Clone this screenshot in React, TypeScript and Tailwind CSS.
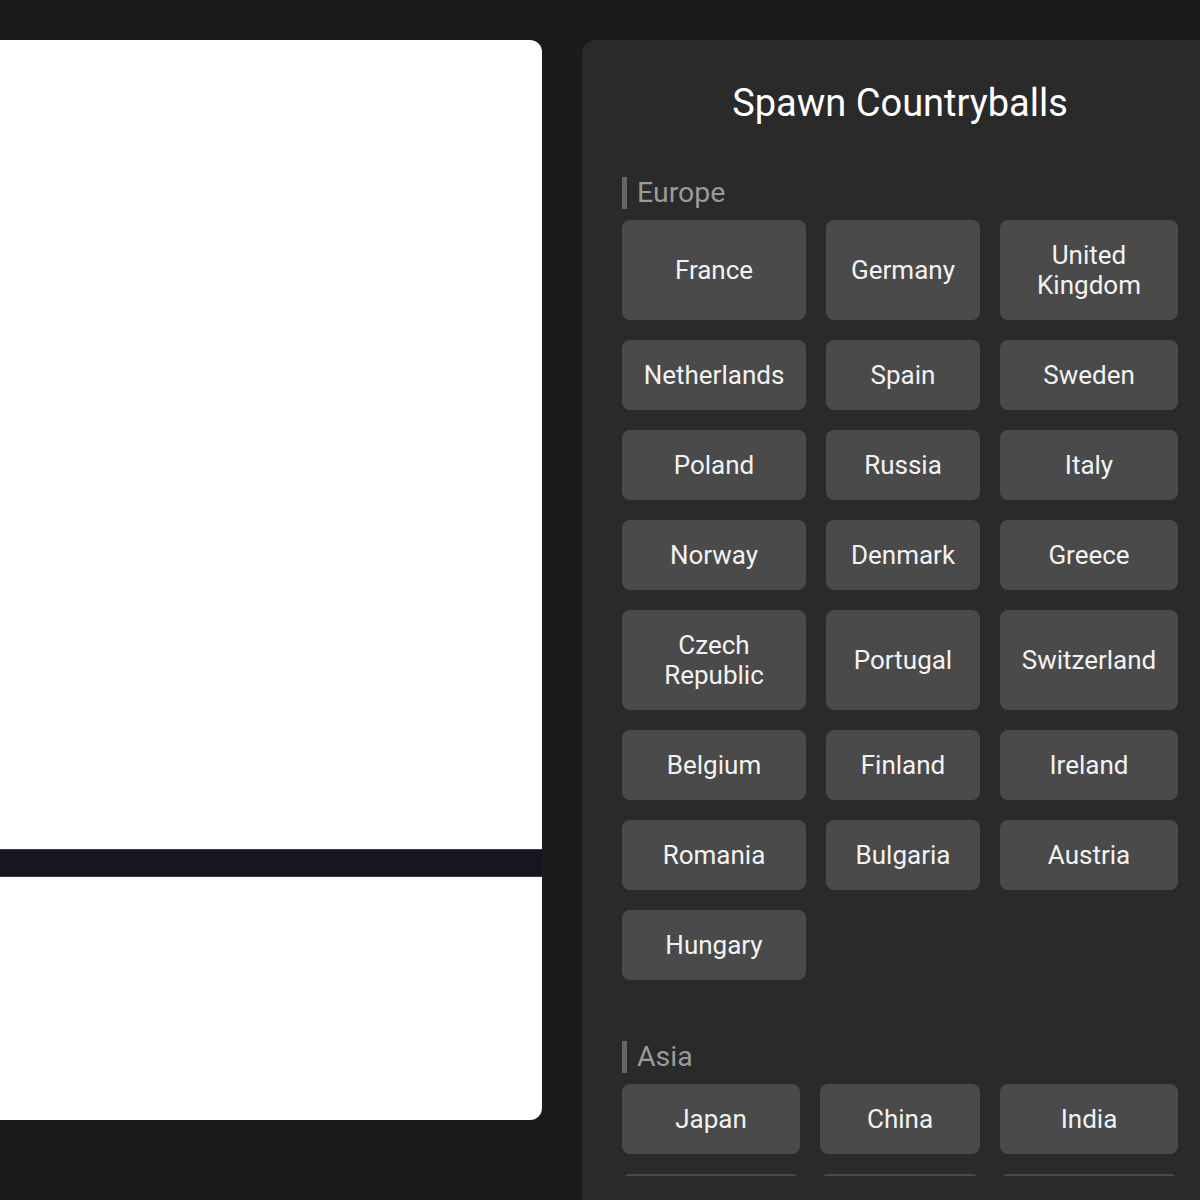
import React from "react";

interface Section {
  name: string;
  cols: string;
  countries: string[];
}

const sections: Section[] = [
  {
    name: "Europe",
    cols: "grid-cols-[184px_154px_178px]",
    countries: [
      "France",
      "Germany",
      "United Kingdom",
      "Netherlands",
      "Spain",
      "Sweden",
      "Poland",
      "Russia",
      "Italy",
      "Norway",
      "Denmark",
      "Greece",
      "Czech Republic",
      "Portugal",
      "Switzerland",
      "Belgium",
      "Finland",
      "Ireland",
      "Romania",
      "Bulgaria",
      "Austria",
      "Hungary",
    ],
  },
  {
    name: "Asia",
    cols: "grid-cols-[178px_160px_178px]",
    countries: ["Japan", "China", "India", "Indonesia", "Vietnam", "Korea"],
  },
];

function CountryButton({ label }: { label: string }) {
  return (
    <button className="flex items-center justify-center rounded-lg bg-[#4a4a4a] px-5 py-5 text-center text-[26px] leading-[30px] text-[#f2f2f2] hover:bg-[#555]">
      {label}
    </button>
  );
}

export default function App() {
  return (
    <div
      className="h-[1200px] w-full overflow-hidden bg-[#1b1b1b]"
      style={{ fontFamily: "Roboto, 'Liberation Sans', sans-serif" }}
    >
      <div className="flex gap-10 pt-10">
        {/* game canvas + bottom strip */}
        <div className="flex w-[542px] shrink-0 flex-col self-start overflow-hidden rounded-r-xl">
          <div className="h-[809px] bg-white" />
          <div className="h-[28px] border-y border-[#3a3a44] bg-[#15161f]" />
          <div className="h-[243px] bg-white" />
        </div>

        <div className="flex h-[1160px] w-[636px] shrink-0 flex-col rounded-tl-[14px] bg-[#2a2a2a] px-10 pb-6 pt-10">
          <h1 className="mb-[51px] text-center text-[38px] leading-[46px] text-white">
            Spawn Countryballs
          </h1>
          <div className="flex-1 overflow-hidden">
            {sections.map((s) => (
              <div key={s.name} className="mb-[61px]">
                <h2 className="mb-[11px] border-l-[5px] border-[#666] pl-[10px] text-[28.5px] leading-8 text-[#9a9a9a]">
                  {s.name}
                </h2>
                <div className={`grid gap-5 ${s.cols}`}>
                  {s.countries.map((c) => (
                    <CountryButton key={c} label={c} />
                  ))}
                </div>
              </div>
            ))}
          </div>
        </div>
      </div>
    </div>
  );
}
